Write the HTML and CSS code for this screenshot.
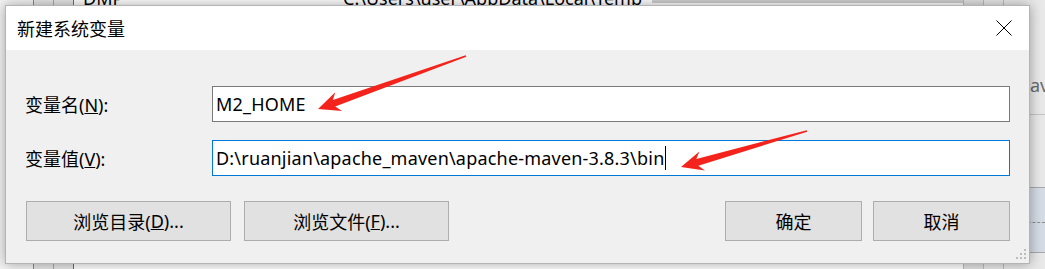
FILE: index.html
```html
<!DOCTYPE html>
<html lang="zh-CN">
<head>
    <meta charset="UTF-8">
    <title>新建系统变量</title>
    <link rel="stylesheet" href="styles.css">
</head>
<body>
    <!-- 后面的环境变量列表窗口 -->
    <div class="desk">
        <div class="col col-a"></div>
        <div class="col col-b"></div>
        <div class="col col-c"></div>
        <div class="col col-name"><span class="cell-text">DMP</span></div>
        <div class="col col-value">
            <span class="cell-text">C:\Users\user\AppData\Local\Temp</span>
            <span class="row-bar"></span>
        </div>
        <div class="col col-f"></div>
        <div class="col col-g"></div>
        <div class="col col-side">
            <div class="side-row side-top"></div>
            <div class="side-row side-java"><span>Java</span></div>
            <div class="side-row side-mid"></div>
            <div class="side-row side-sel"><div class="dash"></div></div>
            <div class="side-row side-end"></div>
        </div>
    </div>

    <div class="dialog">
        <div class="titlebar">
            <div class="title">新建系统变量</div>
            <div class="close">
                <svg width="16" height="16" viewBox="0 0 16 16">
                    <path d="M0.5 0.5 L15.5 15.5 M15.5 0.5 L0.5 15.5" stroke="#000" stroke-width="1" fill="none"/>
                </svg>
            </div>
        </div>
        <div class="dialog-body">
            <div class="form">
                <label class="label">变量名(<u>N</u>):</label>
                <div class="field">M2_HOME</div>
                <label class="label">变量值(<u>V</u>):</label>
                <div class="field focused">D:\ruanjian\apache_maven\apache-maven-3.8.3\bin<span class="caret"></span></div>
            </div>
            <div class="actions">
                <button class="btn btn-wide">浏览目录(<u>D</u>)...</button>
                <button class="btn btn-wide">浏览文件(<u>F</u>)...</button>
                <div class="spacer"></div>
                <button class="btn btn-narrow">确定</button>
                <button class="btn btn-narrow">取消</button>
            </div>
        </div>
        <svg class="grip" width="12" height="12" viewBox="0 0 12 12">
            <rect x="9" y="0" width="2" height="2" fill="#bdbdbd"/>
            <rect x="5" y="4" width="2" height="2" fill="#bdbdbd"/>
            <rect x="9" y="4" width="2" height="2" fill="#bdbdbd"/>
            <rect x="1" y="8" width="2" height="2" fill="#bdbdbd"/>
            <rect x="5" y="8" width="2" height="2" fill="#bdbdbd"/>
            <rect x="9" y="8" width="2" height="2" fill="#bdbdbd"/>
        </svg>
    </div>

    <!-- 截图上的红色箭头标注 -->
    <svg class="marks" width="1045" height="269" viewBox="0 0 1045 269">
        <polygon fill="#f4231c" points="318,109 342.1,111 335.2,106.6 466.3,56.8 465.7,55.2 332.8,100 335.3,92.2"/>
        <polygon fill="#f4231c" points="681,167 704.9,170.6 698.3,165.7 807.2,131.8 806.8,130.2 696.3,158.9 699.4,151.4"/>
    </svg>
</body>
</html>
```

FILE: styles.css
```css
* {
    margin: 0;
    padding: 0;
    box-sizing: border-box;
}

body {
    position: relative;
    width: 1045px;
    height: 269px;
    overflow: hidden;
    background: #fff;
    font-family: "Noto Sans", "Noto Sans CJK SC", sans-serif;
    font-size: 18px;
    color: #000;
}

/* 背景窗口 */
.desk {
    display: flex;
    height: 269px;
}

.col {
    height: 100%;
    overflow: hidden;
}

.col-a {
    width: 33px;
    background: #f4f4f4;
}

.col-b {
    width: 20px;
    background: #e6e6e6;
    border-left: 1px solid #8a8a8a;
}

.col-c {
    width: 20px;
    background: #e6e6e6;
    border-left: 1px solid #a8a8a8;
}

.col-name {
    width: 270px;
    border-left: 1px solid #6e6e6e;
    padding-left: 9px;
}

.col-value {
    position: relative;
    width: 620px;
}

.cell-text {
    display: block;
    margin-top: -11px;
    line-height: 18px;
    white-space: nowrap;
}

.row-bar {
    position: absolute;
    top: 0;
    left: 309px;
    right: 0;
    height: 3px;
    background: #cfcfcf;
}

.col-f {
    width: 20px;
    border-left: 1px solid #bbb;
    background: #e2e2e2;
}

.col-g {
    width: 20px;
    border-left: 1px solid #bbb;
    background: #e8e8e8;
}

.col-side {
    flex: 1;
    border-left: 1px solid #bbb;
    display: flex;
    flex-direction: column;
    background: #e9e9e9;
}

.side-top {
    height: 56px;
}

.side-java {
    height: 59px;
    border-bottom: 1px solid #c6c6c6;
    display: flex;
    align-items: center;
    padding-left: 21px;
    color: #6a6a6a;
    white-space: nowrap;
}

.side-mid {
    height: 73px;
    border-bottom: 1px solid #a9a9a9;
}

.side-sel {
    height: 65px;
    background: #d5dce6;
    border-bottom: 1px solid #a9a9a9;
    padding-top: 34px;
}

.dash {
    border-top: 1px dashed #8d8d8d;
}

.side-end {
    flex: 1;
}

/* 对话框 */
.dialog {
    position: absolute;
    left: 5px;
    top: 5px;
    width: 1025px;
    height: 259px;
    border: 1px solid #b4b4b4;
    background: #f0f0f0;
    display: flex;
    flex-direction: column;
    box-shadow: 0 0 12px rgba(0, 0, 0, 0.35);
}

.titlebar {
    height: 44px;
    background: #fff;
    display: flex;
    align-items: center;
    padding-left: 11px;
}

.title {
    flex: 1;
}

.close {
    width: 50px;
    height: 44px;
    display: flex;
    align-items: center;
    justify-content: center;
}

.dialog-body {
    flex: 1;
}

.form {
    display: grid;
    grid-template-columns: 187px 798px;
    row-gap: 18px;
    align-items: center;
    padding: 36px 0 0 19px;
}

.field {
    height: 36px;
    border: 1px solid #7a7a7a;
    background: #fff;
    padding-left: 3px;
    display: flex;
    align-items: center;
    white-space: nowrap;
    letter-spacing: 0.2px;
}

.field.focused {
    border-color: #0078d7;
}

.caret {
    width: 1px;
    height: 24px;
    background: #000;
    margin-left: 1px;
}

.actions {
    display: flex;
    gap: 13px;
    margin: 25px 19px 0 20px;
}

.btn {
    height: 40px;
    border: 1px solid #adadad;
    background: #e1e1e1;
    font: inherit;
    color: #000;
    display: flex;
    align-items: center;
    justify-content: center;
}

.btn-wide {
    width: 205px;
}

.btn-narrow {
    width: 137px;
}

.btn-narrow + .btn-narrow {
    margin-left: -2px;
}

.spacer {
    flex: 1;
}

.grip {
    position: absolute;
    right: 2px;
    bottom: 2px;
}

.marks {
    position: absolute;
    left: 0;
    top: 0;
    pointer-events: none;
}
```
